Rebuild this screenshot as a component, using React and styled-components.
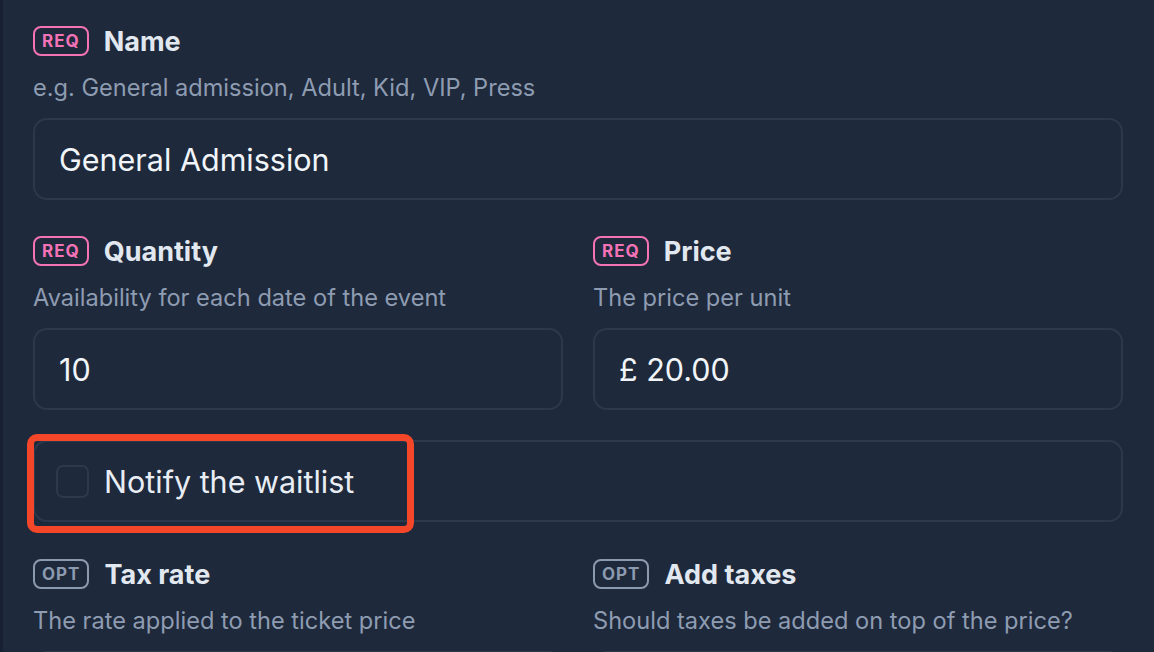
import React from 'react'
import styled, { createGlobalStyle } from 'styled-components'

const GlobalStyle = createGlobalStyle`
    html, body {
        margin: 0;
        padding: 0;
        height: 652px;
        overflow: hidden;
        background: #1e293b;
        font-family: Inter, "Noto Sans", "Liberation Sans", sans-serif;
    }
`

const Page = styled.div`
    height: 652px;
    overflow: hidden;
    box-sizing: border-box;
    border-left: 3px solid #182133;
    background: #1e293b;
    padding: 26px 31px 0 30px;
    display: flex;
    flex-direction: column;
`

const Row = styled.div`
    display: grid;
    grid-template-columns: ${p => p.cols || '1fr'};
    column-gap: 30px;
    margin-top: ${p => p.top || 0}px;
    flex-shrink: 0;
`

const Field = styled.div`
    display: flex;
    flex-direction: column;
`

const Header = styled.div`
    display: flex;
    align-items: center;
    gap: 15px;
    height: 30px;
`

const Badge = styled.span`
    box-sizing: border-box;
    height: 30px;
    display: inline-flex;
    align-items: center;
    padding: 0 7px;
    border: 2px solid ${p => p.required ? '#f472b6' : '#8c9ab0'};
    border-radius: 8px;
    color: ${p => p.required ? '#f472b6' : '#8c9ab0'};
    font-size: 17px;
    font-weight: 700;
    letter-spacing: 1px;
`

const Label = styled.span`
    color: #e2e8f0;
    font-size: 27px;
    font-weight: 700;
`

const Help = styled.div`
    margin-top: 16px;
    line-height: 32px;
    font-size: 23.6px;
    color: #8e9cb2;
`

const Input = styled.div`
    box-sizing: border-box;
    margin-top: 14px;
    height: 82px;
    border: 2px solid #2c384c;
    border-radius: 14px;
    display: flex;
    align-items: center;
    padding: 0 24px;
    color: #f1f5f9;
    font-size: 30.5px;
`

const CheckRow = styled.div`
    position: relative;
    flex-shrink: 0;
    box-sizing: border-box;
    height: 82px;
    margin-top: 30px;
    border: 2px solid #2c384c;
    border-radius: 14px;
    display: flex;
    align-items: center;
    gap: 15px;
    padding: 0 21px;
    color: #e8edf4;
    font-size: 30.5px;
`

const Box = styled.span`
    box-sizing: border-box;
    width: 33px;
    height: 33px;
    border: 2px solid #2c384c;
    border-radius: 7px;
`

const Highlight = styled.div`
    position: absolute;
    left: -8px;
    top: -8px;
    width: 387px;
    height: 99px;
    box-sizing: border-box;
    border: 7px solid #f4472a;
    border-radius: 10px;
    pointer-events: none;
`

const FormField = ({ required, label, help, value }) => (
    <Field>
        <Header>
            <Badge required={required}>{required ? 'REQ' : 'OPT'}</Badge>
            <Label>{label}</Label>
        </Header>
        <Help>{help}</Help>
        <Input>{value}</Input>
    </Field>
)

const App = () => (
    <>
        <GlobalStyle />
        <Page>
            <Row>
                <FormField required label="Name" help="e.g. General admission, Adult, Kid, VIP, Press" value="General Admission" />
            </Row>
            <Row cols="1fr 1fr" top={36}>
                <FormField required label="Quantity" help="Availability for each date of the event" value="10" />
                <FormField required label="Price" help="The price per unit" value="£ 20.00" />
            </Row>
            <CheckRow>
                <Box />
                Notify the waitlist
                <Highlight />
            </CheckRow>
            <Row cols="1fr 1fr" top={37}>
                <FormField label="Tax rate" help="The rate applied to the ticket price" value="" />
                <FormField label="Add taxes" help="Should taxes be added on top of the price?" value="" />
            </Row>
        </Page>
    </>
)

export default App
